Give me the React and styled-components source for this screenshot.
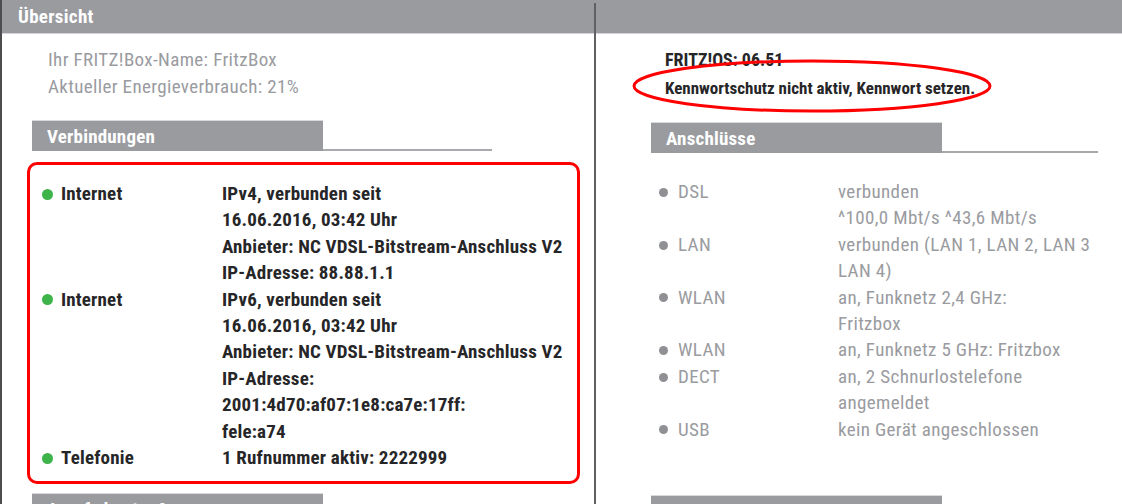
import styled, { createGlobalStyle } from 'styled-components';

const Global = createGlobalStyle`
  body {
    margin: 0;
    background: #fff;
    font-family: Roboto, "DejaVu Sans Condensed", sans-serif;
    font-stretch: 75%;
  }
`;

const Page = styled.div`
  width: 1120px;
  height: 504px;
  overflow: hidden;
  border-left: 2px solid #4d4d4f;
  display: grid;
  grid-template-columns: 592px 2px 1fr;
  grid-template-rows: 33px 1px 1fr;
`;

const Bar = styled.div`
  background: #9a9b9f;
  color: #fff;
  font-weight: bold;
  font-size: 19px;
  letter-spacing: 0.3px;
  display: flex;
  align-items: center;
  padding-left: 16px;
`;

const BarLine = styled.div`
  grid-column: ${p => p.$col};
  background: #d4d5d8;
`;

const Divider = styled.div`
  grid-column: 2;
  grid-row: 1 / -1;
  background: linear-gradient(#9a9b9f 3px, #606062 3px);
`;

const Column = styled.div`
  padding-top: 12px;
  padding-left: ${p => p.$left}px;
  position: relative;
`;

const Info = styled.div`
  margin-left: ${p => p.$indent}px;
  color: ${p => (p.$dark ? '#262628' : '#9a9b9f')};
  font-size: ${p => (p.$dark ? 18 : 19)}px;
  font-weight: ${p => (p.$dark ? 'bold' : 'normal')};
  letter-spacing: ${p => (p.$dark ? 0 : 0.36)}px;
  line-height: ${p => p.$lh || 27}px;
`;

const Notice = styled.div`
  font-size: 17px;
`;

const SectionHead = styled.div`
  display: flex;
  align-items: flex-end;
  width: ${p => p.$total}px;
  margin-top: ${p => p.$mt}px;
`;

const Tab = styled.div`
  width: ${p => p.$w}px;
  height: 31px;
  background: #9a9b9f;
  border-top: 1px solid #d8d9dc;
  color: #fff;
  font-weight: bold;
  font-size: 19px;
  letter-spacing: 0.2px;
  display: flex;
  align-items: center;
  padding-left: 15px;
  box-sizing: border-box;
  flex: none;
  white-space: nowrap;
  overflow: hidden;
`;

const TabLine = styled.div`
  flex: 1;
  height: 2px;
  background: #a9aaae;
`;

const Highlight = styled.div`
  width: 553px;
  margin: 11px 0 0 -5px;
  border: 3px solid #f00;
  border-radius: 10px;
  padding: 16px 0 10px 12px;
  box-sizing: border-box;
`;

const StatusList = styled.div`
  margin-left: ${p => p.$indent}px;
  margin-top: ${p => p.$mt}px;
`;

const Row = styled.div`
  display: grid;
  grid-template-columns: ${p => p.$label}px 1fr;
  line-height: 26.4px;
  font-size: 19px;
  font-weight: ${p => (p.$dark ? 'bold' : 'normal')};
  letter-spacing: ${p => (p.$dark ? 0.18 : 0.36)}px;
  color: ${p => (p.$dark ? '#262628' : '#9a9b9f')};
  white-space: nowrap;
`;

const Label = styled.div`
  display: flex;
  align-items: flex-start;
`;

const Dot = styled.span`
  width: ${p => p.$d}px;
  height: ${p => p.$d}px;
  border-radius: 50%;
  background: ${p => p.$color};
  margin-top: ${p => (26.4 - p.$d) / 2}px;
  margin-right: ${p => p.$gap}px;
  flex: none;
`;

const Ellipse = styled.svg`
  position: absolute;
  left: 36px;
  top: 26px;
  overflow: visible;
`;

const connections = [
  { label: 'Internet', lines: ['IPv4, verbunden seit', '16.06.2016, 03:42 Uhr', 'Anbieter: NC VDSL-Bitstream-Anschluss V2', 'IP-Adresse: 88.88.1.1'] },
  { label: 'Internet', lines: ['IPv6, verbunden seit', '16.06.2016, 03:42 Uhr', 'Anbieter: NC VDSL-Bitstream-Anschluss V2', 'IP-Adresse:', '2001:4d70:af07:1e8:ca7e:17ff:', 'fele:a74'] },
  { label: 'Telefonie', lines: ['1 Rufnummer aktiv: 2222999'] },
];

const ports = [
  { label: 'DSL', lines: ['verbunden', '^100,0 Mbt/s ^43,6 Mbt/s'] },
  { label: 'LAN', lines: ['verbunden (LAN 1, LAN 2, LAN 3', 'LAN 4)'] },
  { label: 'WLAN', lines: ['an, Funknetz 2,4 GHz:', 'Fritzbox'] },
  { label: 'WLAN', lines: ['an, Funknetz 5 GHz: Fritzbox'] },
  { label: 'DECT', lines: ['an, 2 Schnurlostelefone', 'angemeldet'] },
  { label: 'USB', lines: ['kein Gerät angeschlossen'] },
];

const StatusRow = ({ item, dark, label, dot, color, gap }) => (
  <Row $dark={dark} $label={label}>
    <Label>
      <Dot $d={dot} $color={color} $gap={gap} />
      {item.label}
    </Label>
    <div>
      {item.lines.map((l, i) => (
        <div key={i}>{l}</div>
      ))}
    </div>
  </Row>
);

export default function App() {
  return (
    <>
      <Global />
      <Page>
        <Bar>Übersicht</Bar>
        <Divider />
        <Bar />
        <BarLine $col={1} />
        <BarLine $col={3} />

        <Column $left={30}>
          <Info $indent={16}>
            <div>Ihr FRITZ!Box-Name: FritzBox</div>
            <div>Aktueller Energieverbrauch: 21%</div>
          </Info>
          <SectionHead $total={460} $mt={20}>
            <Tab $w={291}>Verbindungen</Tab>
            <TabLine />
          </SectionHead>
          <Highlight>
            {connections.map((c, i) => (
              <StatusRow key={i} item={c} dark label={180} dot={11} color="#3db34a" gap={8} />
            ))}
          </Highlight>
          <SectionHead $total={460} $mt={9}>
            <Tab $w={291}>Anrufe heute: 0</Tab>
            <TabLine />
          </SectionHead>
        </Column>

        <Column $left={55}>
          <Info $indent={14} $dark $lh={28}>
            <div>FRITZ!OS: 06.51</div>
            <Notice>Kennwortschutz nicht aktiv, Kennwort setzen.</Notice>
          </Info>
          <Ellipse width="360" height="52" viewBox="0 0 360 52">
            <ellipse cx="180" cy="26" rx="178" ry="25" fill="none" stroke="#f00" strokeWidth="3" />
          </Ellipse>
          <SectionHead $total={447} $mt={20}>
            <Tab $w={291}>Anschlüsse</Tab>
            <TabLine />
          </SectionHead>
          <StatusList $indent={8} $mt={26}>
            {ports.map((p, i) => (
              <StatusRow key={i} item={p} label={179} dot={9} color="#8f9094" gap={10} />
            ))}
          </StatusList>
          <SectionHead $total={447} $mt={52}>
            <Tab $w={291}>Anrufbeantworter und Faxfunktion</Tab>
            <TabLine />
          </SectionHead>
        </Column>
      </Page>
    </>
  );
}
